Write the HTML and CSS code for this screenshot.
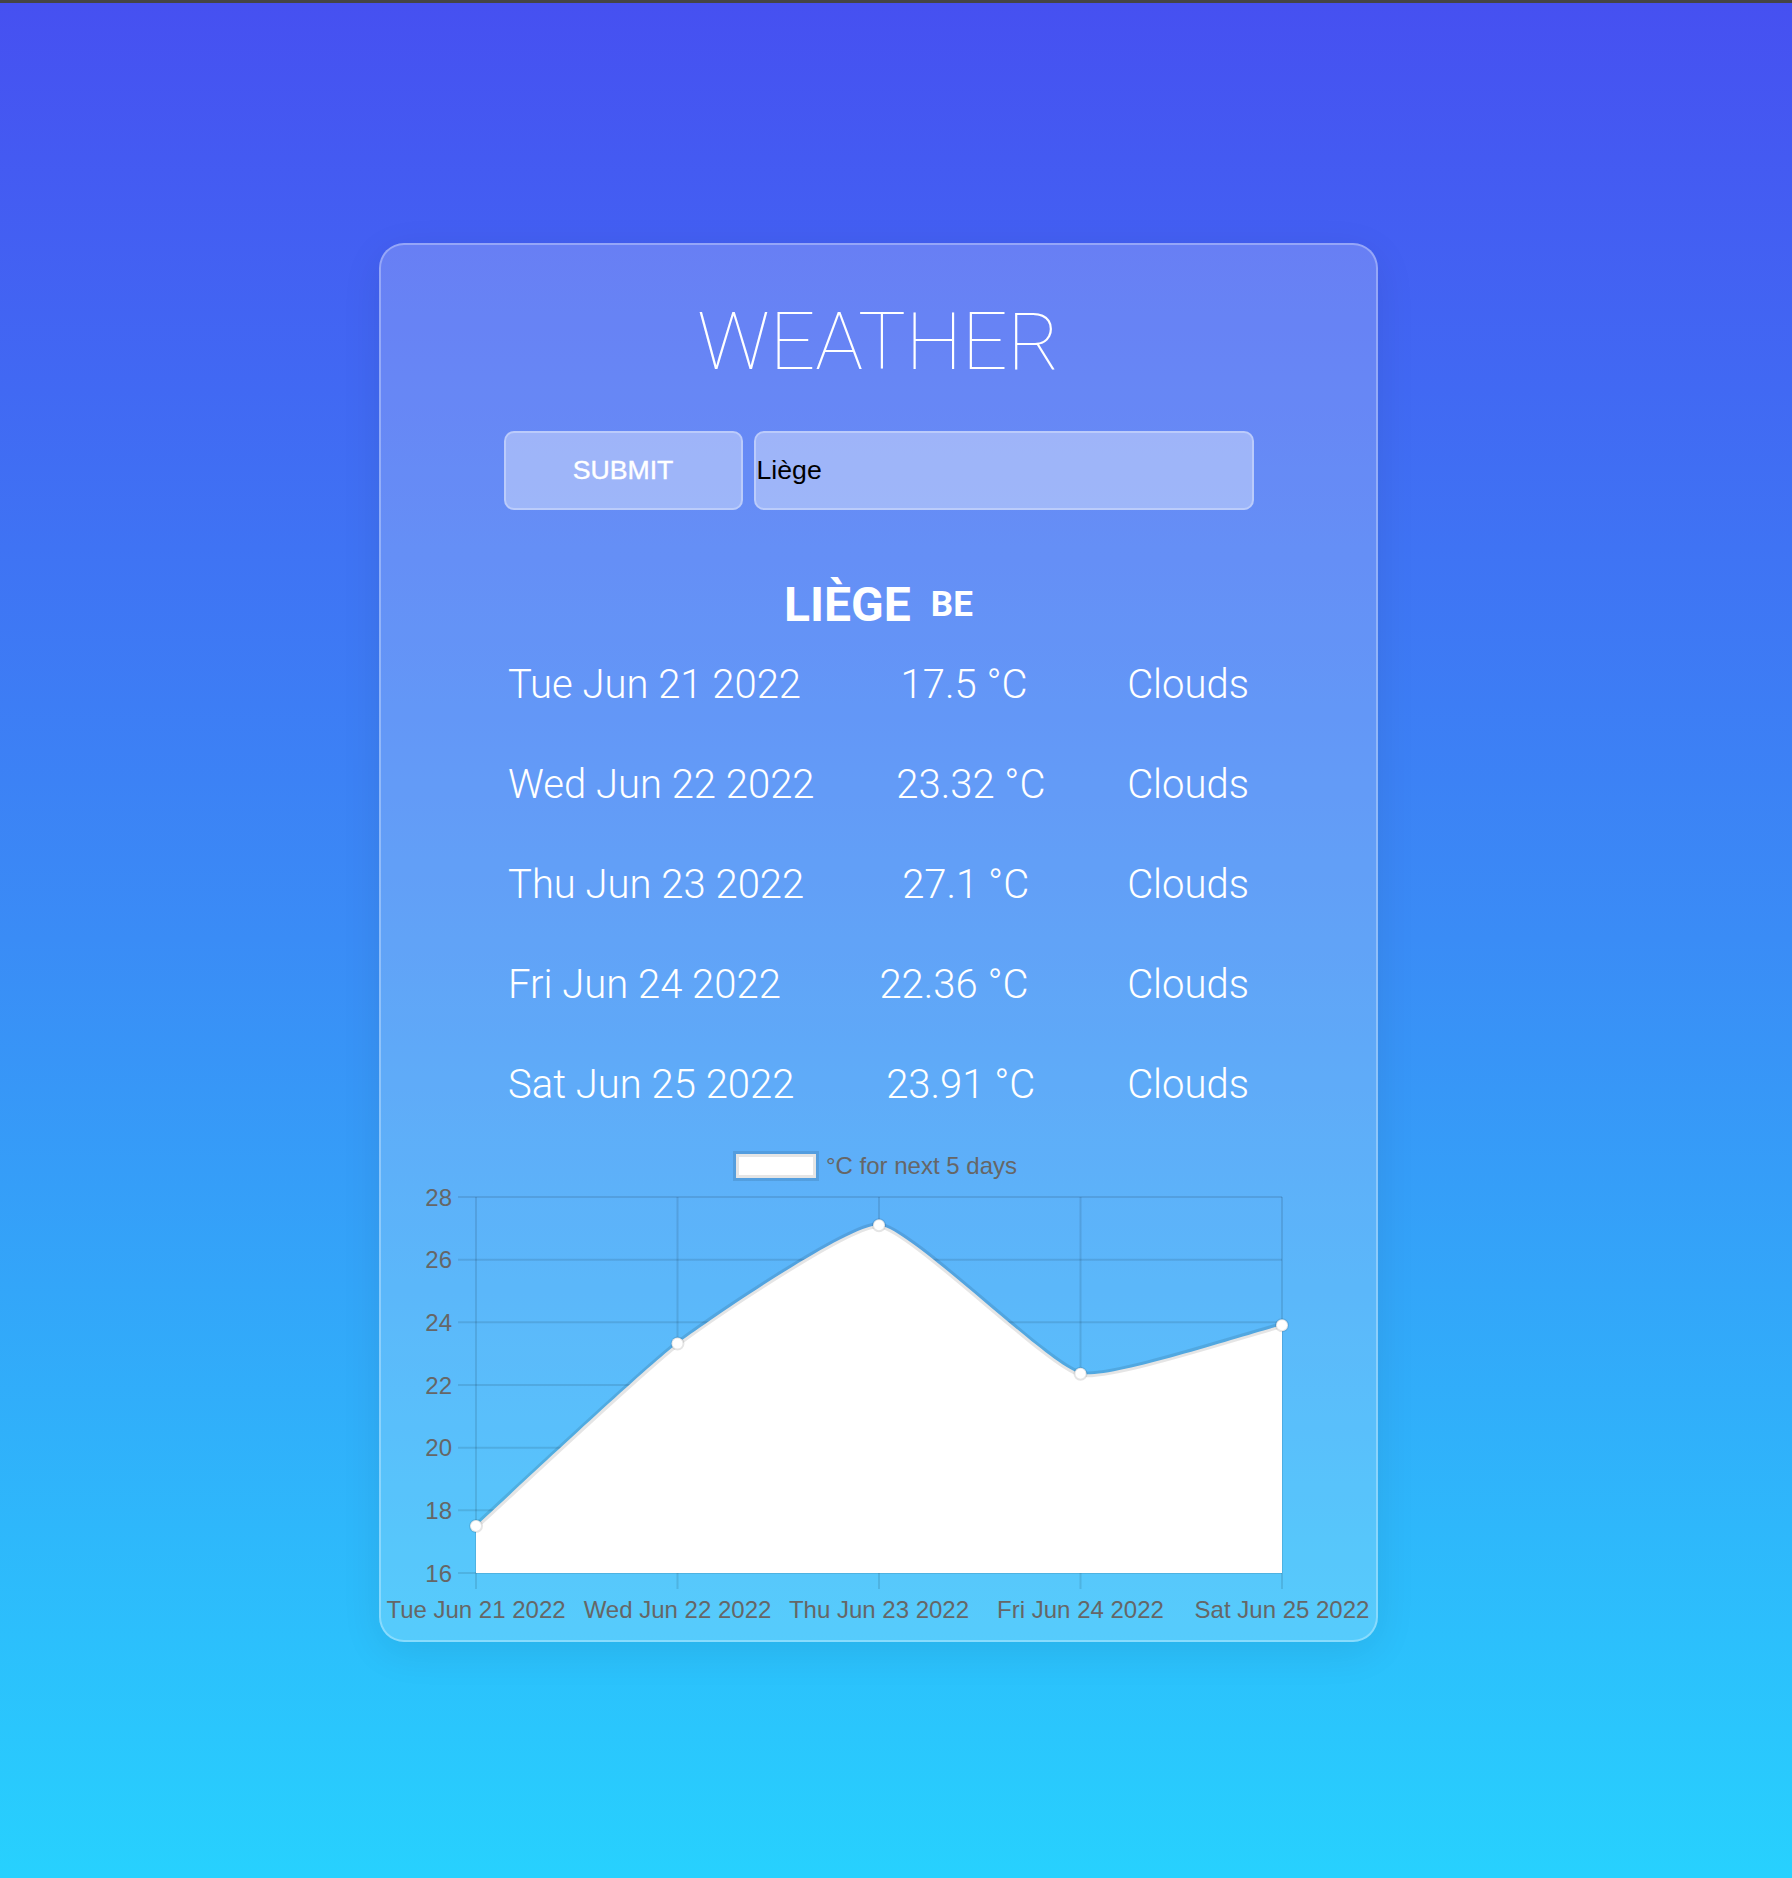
FILE: index.html
```html
<!DOCTYPE html>
<html lang="en">
<head>
<meta charset="utf-8">
<title>Weather</title>
<link rel="stylesheet" href="styles.css">
</head>
<body>
<div class="topbar"></div>
<main class="page">
  <section class="card">
    <h1 class="title">WEATHER</h1>
    <form class="search">
      <button class="submit" type="button">SUBMIT</button>
      <input class="city-input" type="text" value="Liège">
    </form>
    <h2 class="city">LIÈGE<span class="country">BE</span></h2>
    <ul class="forecast">
      <li class="day"><span>Tue Jun 21 2022</span><span>17.5 °C</span><span>Clouds</span></li>
      <li class="day"><span>Wed Jun 22 2022</span><span>23.32 °C</span><span>Clouds</span></li>
      <li class="day"><span>Thu Jun 23 2022</span><span>27.1 °C</span><span>Clouds</span></li>
      <li class="day"><span>Fri Jun 24 2022</span><span>22.36 °C</span><span>Clouds</span></li>
      <li class="day"><span>Sat Jun 25 2022</span><span>23.91 °C</span><span>Clouds</span></li>
    </ul>
    <svg class="chart" width="995" height="505" viewBox="381 1135 995 505" xmlns="http://www.w3.org/2000/svg">
      <rect x="736" y="1154" width="80" height="24" fill="#fff" stroke="rgba(0,0,0,0.1)" stroke-width="6"/>
      <text class="chart-text" x="826" y="1165" dominant-baseline="central">°C for next 5 days</text>
      <g stroke="rgba(0,0,0,0.1)" stroke-width="2">
        <line x1="458" y1="1197" x2="1282" y2="1197"/>
        <line x1="458" y1="1259.7" x2="1282" y2="1259.7"/>
        <line x1="458" y1="1322.3" x2="1282" y2="1322.3"/>
        <line x1="458" y1="1385" x2="1282" y2="1385"/>
        <line x1="458" y1="1447.7" x2="1282" y2="1447.7"/>
        <line x1="458" y1="1510.3" x2="1282" y2="1510.3"/>
        <line x1="458" y1="1573" x2="1282" y2="1573"/>
        <line x1="476" y1="1197" x2="476" y2="1589"/>
        <line x1="677.5" y1="1197" x2="677.5" y2="1589"/>
        <line x1="879" y1="1197" x2="879" y2="1589"/>
        <line x1="1080.5" y1="1197" x2="1080.5" y2="1589"/>
        <line x1="1282" y1="1197" x2="1282" y2="1589"/>
      </g>
      <g class="chart-text" text-anchor="end" dominant-baseline="central">
        <text x="452" y="1197">28</text>
        <text x="452" y="1259.7">26</text>
        <text x="452" y="1322.3">24</text>
        <text x="452" y="1385">22</text>
        <text x="452" y="1447.7">20</text>
        <text x="452" y="1510.3">18</text>
        <text x="452" y="1573">16</text>
      </g>
      <g class="chart-text" text-anchor="middle">
        <text x="476" y="1618">Tue Jun 21 2022</text>
        <text x="677.5" y="1618">Wed Jun 22 2022</text>
        <text x="879" y="1618">Thu Jun 23 2022</text>
        <text x="1080.5" y="1618">Fri Jun 24 2022</text>
        <text x="1282" y="1618">Sat Jun 25 2022</text>
      </g>
      <path fill="#fff" d="M476,1526 C506.2,1498.6 645.0,1367.9 677.5,1343.6 C705.4,1322.8 849.8,1223.0 879,1225.2 C910.3,1227.5 1047.4,1365.5 1080.5,1373.7 C1107.9,1380.5 1251.8,1332.5 1282,1325.2 L1282,1573 L476,1573 Z"/>
      <path fill="none" stroke="rgba(0,0,0,0.1)" stroke-width="6" d="M476,1526 C506.2,1498.6 645.0,1367.9 677.5,1343.6 C705.4,1322.8 849.8,1223.0 879,1225.2 C910.3,1227.5 1047.4,1365.5 1080.5,1373.7 C1107.9,1380.5 1251.8,1332.5 1282,1325.2"/>
      <g fill="#fff" stroke="rgba(0,0,0,0.1)" stroke-width="2">
        <circle cx="476" cy="1526" r="6"/>
        <circle cx="677.5" cy="1343.6" r="6"/>
        <circle cx="879" cy="1225.2" r="6"/>
        <circle cx="1080.5" cy="1373.7" r="6"/>
        <circle cx="1282" cy="1325.2" r="6"/>
      </g>
    </svg>
  </section>
</main>
</body>
</html>
```

FILE: styles.css
```css
* {
  box-sizing: border-box;
}

html,
body {
  margin: 0;
  padding: 0;
}

body {
  min-height: 100vh;
  background: linear-gradient(to bottom, #4650f1 0%, #3a8cf6 50%, #27d1fe 100%);
  font-family: Roboto, "Liberation Sans", sans-serif;
}

.topbar {
  height: 3px;
  background: #454545;
}

.page {
  padding-top: 240px;
  padding-bottom: 236px;
}

.card {
  width: 999px;
  margin-left: 379px;
  padding-top: 50px;
  border: 2px solid rgba(255, 255, 255, 0.3);
  border-radius: 25px;
  background: rgba(255, 255, 255, 0.2);
  box-shadow: 0 10px 40px rgba(0, 0, 0, 0.08);
  display: flex;
  flex-direction: column;
  align-items: center;
  color: #fff;
}

.title {
  margin: 0;
  font-family: Roboto, sans-serif;
  font-weight: 100;
  font-size: 80px;
  line-height: 94px;
}

.search {
  margin: 42px 0 0;
  width: 750px;
  display: flex;
  gap: 11px;
}

.submit {
  width: 239px;
  height: 79px;
  padding: 0;
  border: 2px solid rgba(255, 255, 255, 0.3);
  border-radius: 10px;
  background: rgba(255, 255, 255, 0.37);
  color: #fff;
  font-family: "Liberation Sans", Arial, sans-serif;
  font-size: 26.67px;
  -webkit-text-stroke: 0.4px #fff;
}

.city-input {
  flex: 1;
  height: 79px;
  padding: 0 0 0 1px;
  border: 2px solid rgba(255, 255, 255, 0.3);
  border-radius: 10px;
  background: rgba(255, 255, 255, 0.37);
  color: #000;
  font-family: "Liberation Sans", Arial, sans-serif;
  font-size: 26.67px;
  outline: none;
}

.city {
  margin: 68px 0 0;
  font-family: Roboto, sans-serif;
  font-weight: 700;
  font-size: 48px;
  line-height: 54px;
}

.country {
  margin-left: 20px;
  font-size: 35px;
  line-height: 1;
  vertical-align: 5px;
}

.forecast {
  list-style: none;
  margin: 3px 0 0;
  padding: 0;
  width: 741px;
}

.day {
  display: flex;
  justify-content: space-between;
  height: 100px;
  line-height: 100px;
  font-family: Roboto, sans-serif;
  font-weight: 300;
  font-size: 40px;
  white-space: nowrap;
}

.chart {
  display: block;
  flex: none;
}

.chart-text {
  font-family: "Liberation Sans", Arial, sans-serif;
  font-size: 24px;
  fill: #666;
}
```
